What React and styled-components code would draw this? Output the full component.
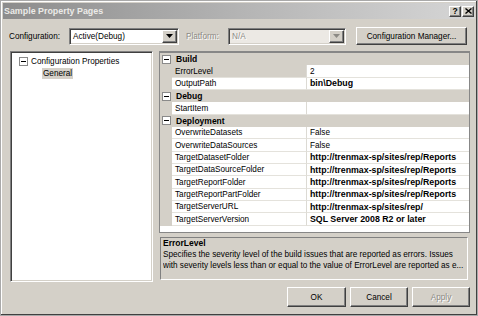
import React from "react";
import styled, { createGlobalStyle, css } from "styled-components";

const GlobalStyle = createGlobalStyle`
  html, body { margin: 0; padding: 0; background: #ffffff; }
  body { font-family: "Liberation Sans", Arial, sans-serif; }
  * { box-sizing: border-box; }
`;

const sunken = css`
  border: 1px solid;
  border-color: #808080 #ffffff #ffffff #808080;
  box-shadow: inset 1px 1px #404040, inset -1px -1px #d4d0c8;
`;

const raised = css`
  border: 1px solid;
  border-color: #ffffff #404040 #404040 #ffffff;
  box-shadow: inset -1px -1px #808080;
  background: #d4d0c8;
`;

const disabledText = css`
  color: #8c8a85;
  text-shadow: 1px 1px #ffffff;
`;

const Window = styled.div`
  width: 478px;
  height: 316px;
  background: #d4d0c8;
  border: 1px solid #a9a9a9;
  box-shadow: inset -1px -1px #404040, inset 1px 1px #ffffff;
  padding: 2px;
  display: flex;
  flex-direction: column;
  font-size: 8.2px;
  color: #000;
  overflow: hidden;
`;

const TitleBar = styled.div`
  height: 16px;
  display: flex;
  align-items: center;
  padding: 0 1px 0 1px;
  background: linear-gradient(90deg, #8c8c8c 0%, #b4b4b4 50%, #d6d6d6 100%);
`;

const TitleText = styled.span`
  font-weight: bold;
  font-size: 8.9px;
  color: #ecebe8;
`;

const TitleButtons = styled.div`
  margin-left: auto;
  display: flex;
  gap: 1px;
`;

const TitleButton = styled.div`
  ${raised};
  width: 12px;
  height: 11px;
  display: flex;
  align-items: center;
  justify-content: center;
  font-weight: bold;
  font-size: 8.5px;
  line-height: 1;
`;

const Body = styled.div`
  flex: 1;
  display: flex;
  flex-direction: column;
  padding: 8px 5px 0 6px;
`;

const ConfigRow = styled.div`
  display: flex;
  align-items: center;
  height: 18px;
`;

const Label = styled.span`
  width: ${(p) => p.$w}px;
  margin-left: ${(p) => p.$ml || 0}px;
  white-space: nowrap;
  ${(p) => p.$disabled && disabledText};
`;

const Combo = styled.div`
  ${sunken};
  width: ${(p) => p.$w}px;
  height: 17px;
  padding: 1px;
  display: flex;
  align-items: stretch;
  background: ${(p) => (p.$disabled ? "#ece9e4" : "#ffffff")};
`;

const ComboText = styled.span`
  flex: 1;
  padding-left: 2px;
  display: flex;
  align-items: center;
  white-space: nowrap;
  overflow: hidden;
  ${(p) => p.$disabled && disabledText};
`;

const ComboArrow = styled.div`
  ${raised};
  width: 15px;
  display: flex;
  align-items: center;
  justify-content: center;
`;

const Button = styled.div`
  ${raised};
  width: ${(p) => p.$w}px;
  height: ${(p) => p.$h || 20}px;
  margin-left: ${(p) => p.$ml || 0}px;
  display: flex;
  align-items: center;
  justify-content: center;
  white-space: nowrap;
  ${(p) => p.$disabled && disabledText};
`;

const Main = styled.div`
  display: flex;
  gap: 6px;
  margin-top: 6px;
  height: 232px;
`;

const Tree = styled.div`
  ${sunken};
  width: 143px;
  height: 231px;
  margin-left: 1px;
  background: #ffffff;
  padding: 3px 0 0 8px;
`;

const TreeRow = styled.div`
  display: flex;
  align-items: center;
  gap: 2px;
  height: 12px;
  padding-left: ${(p) => p.$indent || 0}px;
`;

const TreeLabel = styled.span`
  white-space: nowrap;
  padding: 1px 1px;
  background: ${(p) => (p.$selected ? "#d4d0c8" : "transparent")};
`;

const Expander = styled.span`
  width: 9px;
  height: 9px;
  border: 1px solid #8a8a8a;
  background: #ffffff;
  display: inline-flex;
  align-items: center;
  justify-content: center;
  flex: none;
  &::after {
    content: "";
    width: 5px;
    height: 1px;
    background: #000;
  }
`;

const RightPanel = styled.div`
  width: 311px;
  display: flex;
  flex-direction: column;
`;

const Grid = styled.div`
  height: 182px;
  border: 1px solid #878787;
  border-top-width: 2px;
  background: #ffffff;
  overflow: hidden;
`;

const Row = styled.div`
  display: flex;
  height: 12.35px;
  background: ${(p) => (p.$category ? "#d4d0c8" : "#ffffff")};
`;

const Gutter = styled.div`
  width: 12px;
  flex: none;
  background: #d4d0c8;
  display: flex;
  align-items: center;
  justify-content: center;
`;

const CategoryName = styled.div`
  flex: 1;
  padding-left: 4px;
  font-weight: bold;
  font-size: 8.5px;
  display: flex;
  align-items: center;
`;

const NameCell = styled.div`
  width: 135px;
  flex: none;
  padding-left: 3px;
  display: flex;
  align-items: center;
  white-space: nowrap;
  border-right: 1px solid #dcdad4;
  border-bottom: 1px solid #e4e2dc;
  background: ${(p) => (p.$selected ? "#d4d0c8" : "#ffffff")};
`;

const ValueCell = styled.div`
  flex: 1;
  min-width: 0;
  padding-left: 3px;
  display: flex;
  align-items: center;
  white-space: nowrap;
  overflow: hidden;
  border-bottom: 1px solid #e4e2dc;
  font-weight: ${(p) => (p.$bold ? "bold" : "normal")};
  font-size: ${(p) => (p.$bold ? "8.8px" : "8.2px")};
`;

const Description = styled.div`
  ${sunken};
  box-shadow: none;
  margin: 4px 2px 0 1px;
  height: 43px;
  padding: 0 2px;
  line-height: 11px;
  overflow: hidden;
`;

const DescTitle = styled.div`
  font-weight: bold;
  font-size: 8.5px;
`;

const DescLine = styled.div`
  white-space: nowrap;
  overflow: hidden;
`;

const ButtonRow = styled.div`
  display: flex;
  justify-content: flex-end;
  gap: 4px;
  margin-top: 4px;
`;

const Arrow = ({ disabled }) => (
  <svg width="7" height="4" viewBox="0 0 7 4">
    <polygon points="0,0 7,0 3.5,4" fill={disabled ? "#8c8a85" : "#000"} />
  </svg>
);

const CloseGlyph = () => (
  <svg width="7" height="6" viewBox="0 0 7 6">
    <path d="M0.5 0.5 L6.5 5.5 M6.5 0.5 L0.5 5.5" stroke="#000" strokeWidth="1.4" />
  </svg>
);

const properties = [
  { category: "Build" },
  { name: "ErrorLevel", value: "2", selected: true },
  { name: "OutputPath", value: "bin\\Debug", bold: true },
  { category: "Debug" },
  { name: "StartItem", value: "" },
  { category: "Deployment" },
  { name: "OverwriteDatasets", value: "False" },
  { name: "OverwriteDataSources", value: "False" },
  { name: "TargetDatasetFolder", value: "http://trenmax-sp/sites/rep/Reports", bold: true },
  { name: "TargetDataSourceFolder", value: "http://trenmax-sp/sites/rep/Reports", bold: true },
  { name: "TargetReportFolder", value: "http://trenmax-sp/sites/rep/Reports", bold: true },
  { name: "TargetReportPartFolder", value: "http://trenmax-sp/sites/rep/Reports", bold: true },
  { name: "TargetServerURL", value: "http://trenmax-sp/sites/rep/", bold: true },
  { name: "TargetServerVersion", value: "SQL Server 2008 R2 or later", bold: true },
];

export default function App() {
  return (
    <>
      <GlobalStyle />
      <Window>
        <TitleBar>
          <TitleText>Sample Property Pages</TitleText>
          <TitleButtons>
            <TitleButton>?</TitleButton>
            <TitleButton>
              <CloseGlyph />
            </TitleButton>
          </TitleButtons>
        </TitleBar>
        <Body>
          <ConfigRow>
            <Label $w={60}>Configuration:</Label>
            <Combo $w={110}>
              <ComboText>Active(Debug)</ComboText>
              <ComboArrow>
                <Arrow />
              </ComboArrow>
            </Combo>
            <Label $w={42} $ml={7} $disabled>
              Platform:
            </Label>
            <Combo $w={118} $disabled>
              <ComboText $disabled>N/A</ComboText>
              <ComboArrow>
                <Arrow disabled />
              </ComboArrow>
            </Combo>
            <Button $w={111} $h={18} $ml={10}>
              Configuration Manager...
            </Button>
          </ConfigRow>
          <Main>
            <Tree>
              <TreeRow>
                <Expander />
                <TreeLabel>Configuration Properties</TreeLabel>
              </TreeRow>
              <TreeRow $indent={23}>
                <TreeLabel $selected>General</TreeLabel>
              </TreeRow>
            </Tree>
            <RightPanel>
              <Grid>
                {properties.map((p, i) =>
                  p.category ? (
                    <Row key={i} $category>
                      <Gutter>
                        <Expander />
                      </Gutter>
                      <CategoryName>{p.category}</CategoryName>
                    </Row>
                  ) : (
                    <Row key={i}>
                      <Gutter />
                      <NameCell $selected={p.selected}>{p.name}</NameCell>
                      <ValueCell $bold={p.bold}>{p.value}</ValueCell>
                    </Row>
                  )
                )}
              </Grid>
              <Description>
                <DescTitle>ErrorLevel</DescTitle>
                <DescLine>
                  Specifies the severity level of the build issues that are reported as errors. Issues
                </DescLine>
                <DescLine>
                  with severity levels less than or equal to the value of ErrorLevel are reported as e...
                </DescLine>
              </Description>
            </RightPanel>
          </Main>
          <ButtonRow>
            <Button $w={59}>OK</Button>
            <Button $w={58}>Cancel</Button>
            <Button $w={58} $disabled>
              Apply
            </Button>
          </ButtonRow>
        </Body>
      </Window>
    </>
  );
}
